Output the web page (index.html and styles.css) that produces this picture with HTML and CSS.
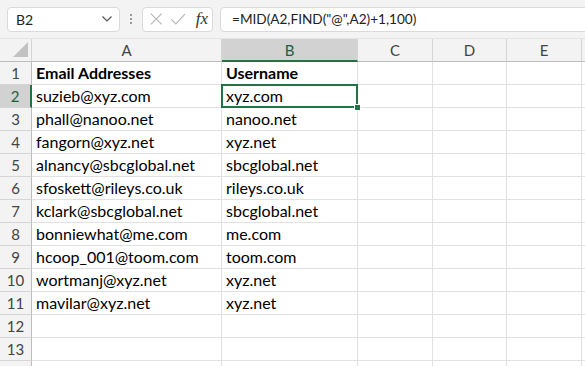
FILE: index.html
```html
<!doctype html>
<html>
    <head>
        <meta charset="utf-8" />
        <title>Book1 - Excel</title>
        <link rel="stylesheet" href="styles.css">
    </head>
    <body>
        <div id="app">
            <header class="fbar">
                <div class="namebox">
                    <span>B2</span>
                    <svg width="12" height="8" viewBox="0 0 12 8"><path d="M1.5 1.5 L6 6 L10.5 1.5" fill="none" stroke="#555" stroke-width="1.2"/></svg>
                </div>
                <div class="grip"><i></i><i></i><i></i></div>
                <div class="fxbox">
                    <svg width="16" height="16" viewBox="0 0 16 16"><path d="M2 2 L14 14 M14 2 L2 14" stroke="#b4b4b4" stroke-width="1.2"/></svg>
                    <svg width="18" height="16" viewBox="0 0 18 16"><path d="M1.5 8.5 L6.5 13.5 L16.5 2.5" fill="none" stroke="#b4b4b4" stroke-width="1.2"/></svg>
                    <span class="fx">fx</span>
                </div>
                <div class="formula">=MID(A2,FIND("@",A2)+1,100)</div>
            </header>
            <section class="sheet">
                <div class="corner"></div>
                <div class="ch">A</div>
                <div class="ch sel">B</div>
                <div class="ch">C</div>
                <div class="ch">D</div>
                <div class="ch">E</div>
                <div class="ch"></div>

                <div class="rh">1</div><div class="c b">Email Addresses</div><div class="c b">Username</div><div class="c"></div><div class="c"></div><div class="c"></div><div class="c"></div>
                <div class="rh sel">2</div><div class="c">suzieb@xyz.com</div><div class="c active">xyz.com</div><div class="c"></div><div class="c"></div><div class="c"></div><div class="c"></div>
                <div class="rh">3</div><div class="c">phall@nanoo.net</div><div class="c">nanoo.net</div><div class="c"></div><div class="c"></div><div class="c"></div><div class="c"></div>
                <div class="rh">4</div><div class="c">fangorn@xyz.net</div><div class="c">xyz.net</div><div class="c"></div><div class="c"></div><div class="c"></div><div class="c"></div>
                <div class="rh">5</div><div class="c">alnancy@sbcglobal.net</div><div class="c">sbcglobal.net</div><div class="c"></div><div class="c"></div><div class="c"></div><div class="c"></div>
                <div class="rh">6</div><div class="c">sfoskett@rileys.co.uk</div><div class="c">rileys.co.uk</div><div class="c"></div><div class="c"></div><div class="c"></div><div class="c"></div>
                <div class="rh">7</div><div class="c">kclark@sbcglobal.net</div><div class="c">sbcglobal.net</div><div class="c"></div><div class="c"></div><div class="c"></div><div class="c"></div>
                <div class="rh">8</div><div class="c">bonniewhat@me.com</div><div class="c">me.com</div><div class="c"></div><div class="c"></div><div class="c"></div><div class="c"></div>
                <div class="rh">9</div><div class="c">hcoop_001@toom.com</div><div class="c">toom.com</div><div class="c"></div><div class="c"></div><div class="c"></div><div class="c"></div>
                <div class="rh">10</div><div class="c">wortmanj@xyz.net</div><div class="c">xyz.net</div><div class="c"></div><div class="c"></div><div class="c"></div><div class="c"></div>
                <div class="rh">11</div><div class="c">mavilar@xyz.net</div><div class="c">xyz.net</div><div class="c"></div><div class="c"></div><div class="c"></div><div class="c"></div>
                <div class="rh">12</div><div class="c"></div><div class="c"></div><div class="c"></div><div class="c"></div><div class="c"></div><div class="c"></div>
                <div class="rh">13</div><div class="c"></div><div class="c"></div><div class="c"></div><div class="c"></div><div class="c"></div><div class="c"></div>
                <div class="rh"></div><div class="c"></div><div class="c"></div><div class="c"></div><div class="c"></div><div class="c"></div><div class="c"></div>
            </section>
        </div>
    </body>
</html>
```

FILE: styles.css
```css
html, body {
    margin: 0px;
    padding: 0px;
    height: 100%;
    overflow: hidden;
    background: white;
}

body {
    font-family: Lato, "Liberation Sans", sans-serif;
    color: black;
}

.fbar {
    height: 39px;
    background: #f3f3f3;
    display: flex;
    align-items: center;
    padding: 0px 0px 0px 7px;
    box-sizing: border-box;
    border-bottom: 1px solid #e4e4e4;
}

.namebox, .fxbox, .formula {
    height: 25px;
    box-sizing: border-box;
    background: white;
    border: 1px solid #dadada;
    border-radius: 4px;
    display: flex;
    align-items: center;
}

.namebox {
    width: 113px;
    padding: 0px 6px 0px 8px;
    justify-content: space-between;
    font-size: 14px;
    color: #222;
}

.grip {
    width: 22px;
    display: flex;
    flex-direction: column;
    align-items: center;
    gap: 2px;
}

.grip i {
    width: 2px;
    height: 2px;
    background: #9a9a9a;
}

.fxbox {
    width: 71px;
    padding: 0px 4px 0px 6px;
    gap: 7px;
}

.fx {
    font-family: "Liberation Serif", serif;
    font-style: italic;
    font-size: 17px;
    color: #333;
    margin-left: 2px;
}

.formula {
    flex: 1;
    margin-left: 7px;
    margin-right: -10px;
    padding-left: 11px;
    font-size: 13.6px;
    color: #222;
}

.sheet {
    display: grid;
    grid-template-columns: 32px 190px 136px 75px 74px 75px 40px;
    grid-template-rows: 23px repeat(14, 23px);
    font-size: 16px;
}

.corner, .ch, .rh {
    background: #f3f3f3;
    color: #444;
    box-sizing: border-box;
    font-size: 15px;
}

.corner {
    position: relative;
    border-right: 1px solid #d5d5d5;
    border-bottom: 1px solid #bcbcbc;
}

.corner::after {
    content: "";
    position: absolute;
    right: 3px;
    bottom: 4px;
    border-left: 15px solid transparent;
    border-bottom: 15px solid #c2c2c2;
}

.ch {
    display: flex;
    align-items: center;
    justify-content: center;
    border-right: 1px solid #d5d5d5;
    border-bottom: 1px solid #bcbcbc;
}

.ch.sel {
    background: #d2d2d2;
    color: #1d5e3b;
    border-bottom: 2px solid #217346;
}

.rh {
    display: flex;
    align-items: center;
    justify-content: center;
    border-right: 1px solid #bcbcbc;
    border-bottom: 1px solid #d5d5d5;
}

.rh.sel {
    background: #d2d2d2;
    color: #1d5e3b;
    border-right: 2px solid #217346;
}

.c {
    box-sizing: border-box;
    border-right: 1px solid #e1e1e1;
    border-bottom: 1px solid #e1e1e1;
    padding: 0px 4px;
    white-space: nowrap;
    line-height: 22px;
}

.c.b {
    font-weight: bold;
}

.c.active {
    position: relative;
}

.c.active::before {
    content: "";
    position: absolute;
    left: -1px;
    top: -1px;
    right: -1px;
    bottom: -1px;
    border: 2px solid #217346;
}

.c.active::after {
    content: "";
    position: absolute;
    right: -4px;
    bottom: -4px;
    width: 5px;
    height: 5px;
    background: #217346;
    border: 1px solid white;
}
```
